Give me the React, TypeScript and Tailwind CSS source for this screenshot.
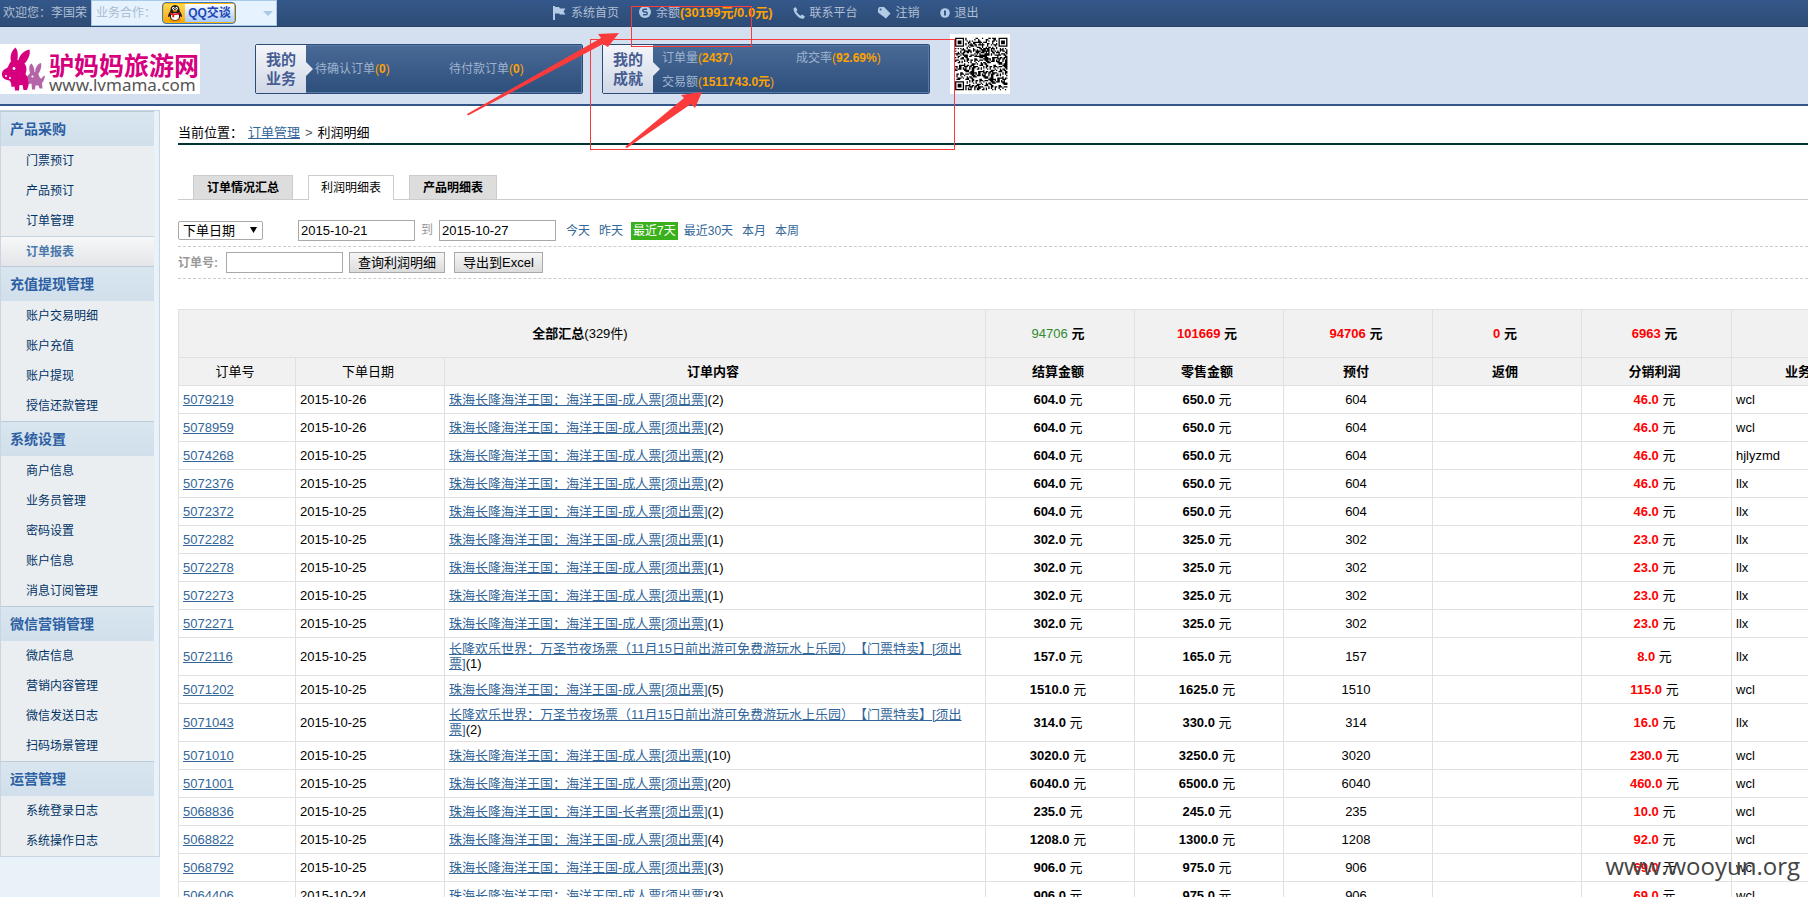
import type { ReactNode } from 'react';

type MenuGroup = { title: string; items: string[] };

const menu: MenuGroup[] = [
  { title: '产品采购', items: ['门票预订', '产品预订', '订单管理', '订单报表'] },
  { title: '充值提现管理', items: ['账户交易明细', '账户充值', '账户提现', '授信还款管理'] },
  { title: '系统设置', items: ['商户信息', '业务员管理', '密码设置', '账户信息', '消息订阅管理'] },
  { title: '微信营销管理', items: ['微店信息', '营销内容管理', '微信发送日志', '扫码场景管理'] },
  { title: '运营管理', items: ['系统登录日志', '系统操作日志'] },
];

const OCEAN = '珠海长隆海洋王国：海洋王国-成人票[须出票]';
const OCEAN_SENIOR = '珠海长隆海洋王国：海洋王国-长者票[须出票]';
const NIGHT = '长隆欢乐世界：万圣节夜场票（11月15日前出游可免费游玩水上乐园）【门票特卖】[须出票]';

type Order = {
  id: string;
  date: string;
  name: string;
  count: number;
  cost: string;
  retail: string;
  prepaid: string;
  profit: string;
  agent: string;
};

const row = (
  id: string, date: string, name: string, count: number,
  cost: string, retail: string, prepaid: string, profit: string, agent: string,
): Order => ({ id, date, name, count, cost, retail, prepaid, profit, agent });

const orders: Order[] = [
  row('5079219', '2015-10-26', OCEAN, 2, '604.0', '650.0', '604', '46.0', 'wcl'),
  row('5078959', '2015-10-26', OCEAN, 2, '604.0', '650.0', '604', '46.0', 'wcl'),
  row('5074268', '2015-10-25', OCEAN, 2, '604.0', '650.0', '604', '46.0', 'hjlyzmd'),
  row('5072376', '2015-10-25', OCEAN, 2, '604.0', '650.0', '604', '46.0', 'llx'),
  row('5072372', '2015-10-25', OCEAN, 2, '604.0', '650.0', '604', '46.0', 'llx'),
  row('5072282', '2015-10-25', OCEAN, 1, '302.0', '325.0', '302', '23.0', 'llx'),
  row('5072278', '2015-10-25', OCEAN, 1, '302.0', '325.0', '302', '23.0', 'llx'),
  row('5072273', '2015-10-25', OCEAN, 1, '302.0', '325.0', '302', '23.0', 'llx'),
  row('5072271', '2015-10-25', OCEAN, 1, '302.0', '325.0', '302', '23.0', 'llx'),
  row('5072116', '2015-10-25', NIGHT, 1, '157.0', '165.0', '157', '8.0', 'llx'),
  row('5071202', '2015-10-25', OCEAN, 5, '1510.0', '1625.0', '1510', '115.0', 'wcl'),
  row('5071043', '2015-10-25', NIGHT, 2, '314.0', '330.0', '314', '16.0', 'llx'),
  row('5071010', '2015-10-25', OCEAN, 10, '3020.0', '3250.0', '3020', '230.0', 'wcl'),
  row('5071001', '2015-10-25', OCEAN, 20, '6040.0', '6500.0', '6040', '460.0', 'wcl'),
  row('5068836', '2015-10-25', OCEAN_SENIOR, 1, '235.0', '245.0', '235', '10.0', 'wcl'),
  row('5068822', '2015-10-25', OCEAN, 4, '1208.0', '1300.0', '1208', '92.0', 'wcl'),
  row('5068792', '2015-10-25', OCEAN, 3, '906.0', '975.0', '906', '69.0', 'wcl'),
  row('5064406', '2015-10-24', OCEAN, 3, '906.0', '975.0', '906', '69.0', 'wcl'),
];

function FlagIcon() {
  return (
    <svg viewBox="0 0 13 14" className="h-3.5 w-[13px]" fill="#b4cbe6">
      <path d="M0 0h2v14H0z" />
      <path d="M2 1h4l1 1.500h5.500L10.500 5.500 12.500 8.500H7L6 7.500H2z" />
    </svg>
  );
}

function CoinIcon() {
  return (
    <svg viewBox="0 0 12 12" className="size-3">
      <circle cx="6" cy="6" r="6" fill="#b4cbe6" />
      <path d="M8 3.200H5.200a1.400 1.400 0 0 0 0 2.800h1.600a1.400 1.400 0 0 1 0 2.800H4" fill="none" stroke="#32568a" strokeWidth="1.500" />
    </svg>
  );
}

function PhoneIcon() {
  return (
    <svg viewBox="0 0 12 12" className="size-3" fill="#b4cbe6">
      <path d="M0.500 1.500 2.500 0 4.500 3 3.300 4.300C4 6 6 8 7.700 8.700L9 7.500l3 2-1.300 2C8 13 0.500 7.500 0.500 1.500z" />
    </svg>
  );
}

function TagIcon() {
  return (
    <svg viewBox="0 0 13 12" className="h-3 w-[13px]">
      <path d="M0 1.500 1.500 0H6l6.500 6.500L8 11.500 0 5.500z" fill="#b4cbe6" />
      <circle cx="2.600" cy="2.600" r="1" fill="#32568a" />
    </svg>
  );
}

function ExitIcon() {
  return (
    <svg viewBox="0 0 10 10" className="size-2.5">
      <circle cx="5" cy="5" r="4.800" fill="#b4cbe6" />
      <path d="M5 2.500v5" stroke="#32568a" strokeWidth="2" />
    </svg>
  );
}

function Penguin() {
  return (
    <svg viewBox="0 0 18 18" className="size-[18px]">
      <ellipse cx="9" cy="16" rx="6" ry="1.800" fill="#f08a00" />
      <path d="M9 1c3 0 4.500 2.200 4.500 5 0 1.300 2.500 4 2.500 6.500 0 1-1 .5-1.700-.5C14 15 12 16.500 9 16.500S4 15 3.700 12c-.7 1-1.700 1.500-1.700.5C2 10 4.500 7.300 4.500 6 4.500 3.200 6 1 9 1z" fill="#1b1b1b" />
      <ellipse cx="9" cy="12.500" rx="4" ry="3.600" fill="#fff" />
      <path d="M4.200 8.200c3 1.600 6.600 1.600 9.600 0l.4 1.600c-2 1.100-4.200 1.400-6 1.300v2.200H6.300v-2.500c-1-.2-1.800-.5-2.500-.9z" fill="#e3151b" />
      <ellipse cx="7.400" cy="4.300" rx="1.200" ry="1.600" fill="#fff" />
      <ellipse cx="10.600" cy="4.300" rx="1.200" ry="1.600" fill="#fff" />
      <circle cx="7.700" cy="4.500" r=".5" />
      <circle cx="10.300" cy="4.500" r=".5" />
      <ellipse cx="9" cy="6.800" rx="2.400" ry=".9" fill="#f6a400" />
    </svg>
  );
}

function Donkeys() {
  return (
    <svg viewBox="0 0 46 50" className="h-[50px] w-[46px] shrink-0">
      <g fill="#b565a7">
        <path d="M31 31C28.500 26 28.500 21 31.500 19.500c2.500 2.500 3 6 3 10z" />
        <path d="M35 29.500c0-5 2-9.500 6-10.500 1 4-1 9-3.500 12z" />
        <path d="M30 29c3-2 8-1 9 2.500.3 1.500 1 3 2.500 3l2.500-3 1 1-1.500 4.500-1.500 2 .5 5.500h-3l-1-3h-3l-.5 4h-3l-.5-6c-2 1-6 .5-7-2.500-.7-3 3-4.500 5.500-8z" />
      </g>
      <circle cx="32.500" cy="32.500" r="1.100" fill="#fff" />
      <circle cx="27.500" cy="36.500" r=".9" fill="#fff" />
      <g fill="#d6007f">
        <path d="M12 20C8.500 13 12 6 15.500 3.500 18.500 7 18 13 17 19z" />
        <path d="M18 20c0-7 4-13 11.500-14.500C31 11 27 18 22 22z" />
        <path d="M11 17.500c5-3 12-1 14.500 3.500 1.500 3 1 6.500 0 9 2.500 3 3.500 8 3 11.500l-1.500 4.500h-3.500l-1-5h-3l-.5 5.500h-4l-.5-4-3 .5-.5-4-1.500-2.500C5 36 1.500 34 2 29.500 2.500 26 5 25 7 24c1.500-1 2-5 4-6.500z" />
      </g>
      <circle cx="14" cy="24.500" r="1.400" fill="#fff" />
      <circle cx="6" cy="32" r="1" fill="#fff" />
      <circle cx="10" cy="34" r="1" fill="#fff" />
    </svg>
  );
}

const QR_SIZE = 41;

function qrModules(): string {
  let seed = 20151;
  let d = '';
  const inFinder = (x: number, y: number) =>
    (x < 8 && y < 8) || (x > QR_SIZE - 9 && y < 8) || (x < 8 && y > QR_SIZE - 9);
  for (let y = 0; y < QR_SIZE; y++) {
    for (let x = 0; x < QR_SIZE; x++) {
      seed = (seed * 1103515245 + 12345) % 2147483648;
      if (!inFinder(x, y) && (seed >> 12) % 100 < 54) d += `M${x} ${y}h1v1h-1z`;
    }
  }
  for (const [fx, fy] of [[0, 0], [QR_SIZE - 7, 0], [0, QR_SIZE - 7]]) {
    d += `M${fx} ${fy}h7v7h-7zM${fx + 1} ${fy + 1}v5h5v-5zM${fx + 2} ${fy + 2}h3v3h-3z`;
  }
  return d;
}

function QrCode() {
  return (
    <svg viewBox="-4 -3 47 47" className="mt-[7px] ml-5 size-[60px] shrink-0 bg-white" role="img" aria-label="二维码">
      <path d={qrModules()} fill="#000" />
    </svg>
  );
}

function Orange({ children }: { children: ReactNode }) {
  return (
    <span className="text-[#ffa200]">
      (<b>{children}</b>)
    </span>
  );
}

function Panel({ lines, children }: { lines: [string, string]; children: ReactNode }) {
  return (
    <section className="flex h-[50px] w-[328px] shrink-0 rounded-xs border border-[#2d4b75] bg-linear-to-b from-[#4a6a96] to-[#2d4f7c] text-xs text-[#9fb3cf]">
      <h2 className="relative flex w-[50px] shrink-0 flex-col items-center justify-center bg-linear-to-b from-[#f4f6fa] to-[#d0d8e6] text-[15px] leading-[19px] font-bold text-[#475c92]">
        <span>{lines[0]}</span>
        <span>{lines[1]}</span>
        <svg viewBox="0 0 7 14" className="absolute top-[17px] left-full h-3.5 w-[7px]" fill="#e3e8f1">
          <path d="M0 0l7 7-7 7z" />
        </svg>
      </h2>
      <div className="flex-1 border border-l-0 border-[#5779a6]">{children}</div>
    </section>
  );
}

function TopLink({ icon, children }: { icon: ReactNode; children: ReactNode }) {
  return (
    <a href="#" className="flex items-center gap-[5px] whitespace-nowrap">
      {icon}
      <span>{children}</span>
    </a>
  );
}

function TopBar() {
  return (
    <div className="flex h-[27px] border-b border-[#28456e] bg-linear-to-b from-[#34588b] to-[#2d4c76] text-xs text-[#b0bfd4]">
      <div className="flex w-[553px] shrink-0">
        <span className="w-[91px] pl-[3px] leading-[26px] whitespace-nowrap">欢迎您：李国荣</span>
        <div className="flex h-[26px] w-[186px] items-center border border-[#a9c9e9] bg-[#e6f3ff] pl-1 text-[#a9bbd0]">
          <span className="w-[66px] whitespace-nowrap">业务合作：</span>
          <button type="button" className="flex h-[22px] w-[74px] items-center overflow-hidden rounded-sm border border-[#3a78c8] bg-[#ffb400] p-px">
            <span className="flex h-full w-[21px] items-center justify-center bg-linear-to-b from-[#ffd84a] to-[#f9a800]">
              <Penguin />
            </span>
            <span className="flex h-full flex-1 items-center justify-center bg-linear-to-b from-white to-[#a9cbf8] text-xs font-bold whitespace-nowrap text-[#2146b4]">
              QQ交谈
            </span>
          </button>
          <svg viewBox="0 0 10 5" className="ml-auto h-[5px] w-2.5" fill="#a9c9e9">
            <path d="M0 0h10L5 5z" />
          </svg>
          <span className="w-[3px]" />
        </div>
      </div>
      <nav className="flex h-[25px] items-center gap-5">
        <TopLink icon={<FlagIcon />}>系统首页</TopLink>
        <TopLink icon={<CoinIcon />}>
          余额<b className="text-[13px] text-[#ffa200]">(30199元/0.0元)</b>
        </TopLink>
        <TopLink icon={<PhoneIcon />}>联系平台</TopLink>
        <TopLink icon={<TagIcon />}>注销</TopLink>
        <TopLink icon={<ExitIcon />}>退出</TopLink>
      </nav>
    </div>
  );
}

function Header() {
  return (
    <header>
      <TopBar />
      <div className="flex h-[79px] border-b-2 border-[#32558a] bg-[#d4e0f0]">
        <a href="#" className="mt-[17px] flex h-[50px] w-[200px] shrink-0 bg-white">
          <Donkeys />
          <span className="flex flex-col pt-2 pl-[3px]">
            <span className="font-['Noto_Sans_CJK_SC',sans-serif] text-[25px] leading-[25px] font-bold whitespace-nowrap text-[#d6007f]">驴妈妈旅游网</span>
            <span className="font-['Noto_Sans',sans-serif] text-[17px] leading-4 text-[#555]">www.lvmama.com</span>
          </span>
        </a>
        <div className="mt-[17px] ml-[55px] flex gap-[19px]">
          <Panel lines={['我的', '业务']}>
            <div className="flex h-full items-center pl-[9px]">
              <span className="w-[134px]">待确认订单<Orange>0</Orange></span>
              <span>待付款订单<Orange>0</Orange></span>
            </div>
          </Panel>
          <Panel lines={['我的', '成就']}>
            <div className="grid grid-cols-[134px_1fr] pl-[9px] leading-6">
              <span className="whitespace-nowrap">订单量<Orange>2437</Orange></span>
              <span className="whitespace-nowrap">成交率<Orange>92.69%</Orange></span>
              <span className="whitespace-nowrap">交易额<Orange>1511743.0元</Orange></span>
            </div>
          </Panel>
        </div>
        <QrCode />
      </div>
    </header>
  );
}

function Sidebar() {
  return (
    <aside className="w-40 shrink-0 bg-[#e9f1f9]">
      <nav className="border border-[#c9d5e3] pr-[5px]">
        {menu.map((group) => (
          <section key={group.title} className="bg-[#ebeef1]">
            <h3 className="h-[35px] border-t border-[#bccbd8] bg-linear-to-b from-[#d9e6f0] to-[#d0dfeb] pl-[9px] text-sm leading-[34px] font-bold text-[#2d5fa3]">
              {group.title}
            </h3>
            <ul>
              {group.items.map((item) =>
                item === '订单报表' ? (
                  <li key={item} className="h-[30px] border-t border-[#c9d3df] bg-linear-to-b from-[#f6f7f8] to-[#e3e5e8] pl-[25px] text-xs leading-[30px] font-bold text-[#4a78ab]">
                    <a href="#">{item}</a>
                  </li>
                ) : (
                  <li key={item} className="h-[30px] pl-[25px] text-xs leading-[31px] text-[#003366]">
                    <a href="#">{item}</a>
                  </li>
                ),
              )}
            </ul>
          </section>
        ))}
      </nav>
    </aside>
  );
}

function Tabs() {
  return (
    <div className="mt-[30px] flex h-[25px] border-b border-[#ccc] pl-[15px] text-xs leading-[25px] text-black">
      <a href="#" className="h-[25px] w-[100px] border border-[#ccc] bg-[#ddd] text-center font-bold">订单情况汇总</a>
      <a href="#" className="ml-[15px] h-[25px] w-[86px] border border-b-0 border-[#ccc] bg-white text-center">利润明细表</a>
      <a href="#" className="ml-[15px] h-[25px] w-[88px] border border-[#ccc] bg-[#ddd] text-center font-bold">产品明细表</a>
    </div>
  );
}

const buttonClass =
  'h-[21px] border border-[#a9a9a9] bg-linear-to-b from-[#f6f6f6] to-[#dcdcdc] text-[13px] leading-[19px] text-black';
const inputClass = 'h-[21px] w-[117px] border border-[#a9a9a9] bg-white pl-0.5 text-[13px] leading-[19px] text-black';

function Filters() {
  return (
    <form className="text-[13px]">
      <div className="mt-3.5 flex h-[33px] items-center border-b border-dashed border-[#ccc] text-xs text-[#336699]">
        <div className="relative">
          <select aria-label="日期类型" className="h-[19px] w-[85px] appearance-none rounded-xs border border-[#a9a9a9] bg-white pl-1 text-[13px] leading-[17px] text-black">
            <option>下单日期</option>
          </select>
          <svg viewBox="0 0 7 6" className="pointer-events-none absolute top-1.5 right-1.5 h-1.5 w-[7px]">
            <path d="M0 0h7L3.500 6z" />
          </svg>
        </div>
        <input aria-label="开始日期" defaultValue="2015-10-21" className={`${inputClass} ml-[35px]`} />
        <span className="w-6 text-center text-[#999]">到</span>
        <input aria-label="结束日期" defaultValue="2015-10-27" className={inputClass} />
        <div className="ml-2.5 flex items-center gap-[9px] pt-px whitespace-nowrap">
          <a href="#">今天</a>
          <a href="#">昨天</a>
          <a href="#" className="-mr-[3px] -ml-px bg-[#3ab01c] px-0.5 leading-[18px] text-white">最近7天</a>
          <a href="#">最近30天</a>
          <a href="#">本月</a>
          <a href="#">本周</a>
        </div>
      </div>
      <div className="flex h-8 items-center border-b border-dashed border-[#ccc]">
        <label htmlFor="order-no" className="w-12 text-xs font-bold text-[#999]">订单号:</label>
        <input id="order-no" className={inputClass} />
        <button type="button" className={`${buttonClass} ml-1.5 w-24`}>查询利润明细</button>
        <button type="button" className={`${buttonClass} ml-[9px] w-[89px]`}>导出到Excel</button>
      </div>
    </form>
  );
}

const cell = 'border border-[#e0e0e0] pl-1 pr-2 pt-[3px] pb-1';

function Total({ value, color, bold }: { value: string; color: string; bold?: boolean }) {
  return (
    <th className={`${cell} ${bold ? 'font-bold' : 'font-normal'}`}>
      <span className={color}>{value}</span> {bold ? '元' : <b>元</b>}
    </th>
  );
}

function OrderTable() {
  return (
    <table className="mt-[30px] w-[1703px] table-fixed border-collapse text-[13px] leading-[15px] text-black [text-spacing-trim:space-all]">
      <colgroup>
        <col className="w-[117px]" />
        <col className="w-[149px]" />
        <col className="w-[541px]" />
        <col className="w-[149px]" />
        <col className="w-[149px]" />
        <col className="w-[149px]" />
        <col className="w-[149px]" />
        <col className="w-[150px]" />
        <col className="w-[150px]" />
      </colgroup>
      <thead className="bg-[#f1f1f1]">
        <tr className="h-12">
          <th colSpan={3} className={`${cell} font-normal`}><b>全部汇总</b>(329件)</th>
          <Total value="94706" color="text-[#2e8b2e]" />
          <Total value="101669" color="text-[#f00]" bold />
          <Total value="94706" color="text-[#f00]" bold />
          <Total value="0" color="text-[#f00]" bold />
          <Total value="6963" color="text-[#f00]" bold />
          <th className={cell} />
        </tr>
        <tr className="h-7">
          <th className={`${cell} font-normal`}>订单号</th>
          <th className={`${cell} font-normal`}>下单日期</th>
          {['订单内容', '结算金额', '零售金额', '预付', '返佣', '分销利润', '业务员'].map((title) => (
            <th key={title} className={`${cell} font-bold`}>{title}</th>
          ))}
        </tr>
      </thead>
      <tbody>
        {orders.map((order) => (
          <tr key={order.id} className="h-7">
            <td className={cell}><a href="#" className="text-[#336699] underline">{order.id}</a></td>
            <td className={cell}>{order.date}</td>
            <td className={cell}>
              <a href="#" className="text-[#336699] underline">{order.name}</a>({order.count})
            </td>
            <td className={`${cell} text-center`}><b>{order.cost}</b> 元</td>
            <td className={`${cell} text-center`}><b>{order.retail}</b> 元</td>
            <td className={`${cell} text-center`}>{order.prepaid}</td>
            <td className={cell} />
            <td className={`${cell} text-center`}><b className="text-[#f00]">{order.profit}</b> 元</td>
            <td className={cell}>{order.agent}</td>
          </tr>
        ))}
      </tbody>
    </table>
  );
}

function Annotations() {
  return (
    <svg viewBox="0 0 1000 160" className="pointer-events-none absolute top-0 left-0 h-40 w-[1000px]">
      <g fill="none" stroke="#fb3b3b">
        <rect x="631.500" y="6.500" width="120" height="40" />
        <rect x="590.500" y="39.500" width="364" height="110" />
      </g>
      <g fill="#fb3b3b">
        <path d="M467 114 468 115.500 603 44 608 47 619 33 598 34 601 38z" />
        <path d="M625 147 627 148 691 104 695 108 702 92 681 95 684 98z" />
      </g>
    </svg>
  );
}

export default function App() {
  return (
    <div className="relative flex h-screen flex-col overflow-hidden bg-white font-['Liberation_Sans','Noto_Sans_CJK_SC',sans-serif]">
      <Header />
      <div className="mt-1 flex min-h-0 flex-1">
        <Sidebar />
        <main className="min-w-0 flex-1 overflow-hidden pl-[18px]">
          <div className="flex h-[35px] items-end border-b-2 border-[#003333] pb-0.5 text-[13px] leading-[17px] whitespace-nowrap text-black">
            <span className="w-[70px]">当前位置：</span>
            <a href="#" className="text-[#336699] underline">订单管理</a>
            <span className="px-[5px] text-[#555]">&gt;</span>
            <span>利润明细</span>
          </div>
          <Tabs />
          <Filters />
          <OrderTable />
        </main>
      </div>
      <Annotations />
      <div className="pointer-events-none absolute right-2 bottom-3.5 font-['Open_Sans',sans-serif] text-2xl leading-[34px] text-[#444]">www.wooyun.org</div>
    </div>
  );
}
